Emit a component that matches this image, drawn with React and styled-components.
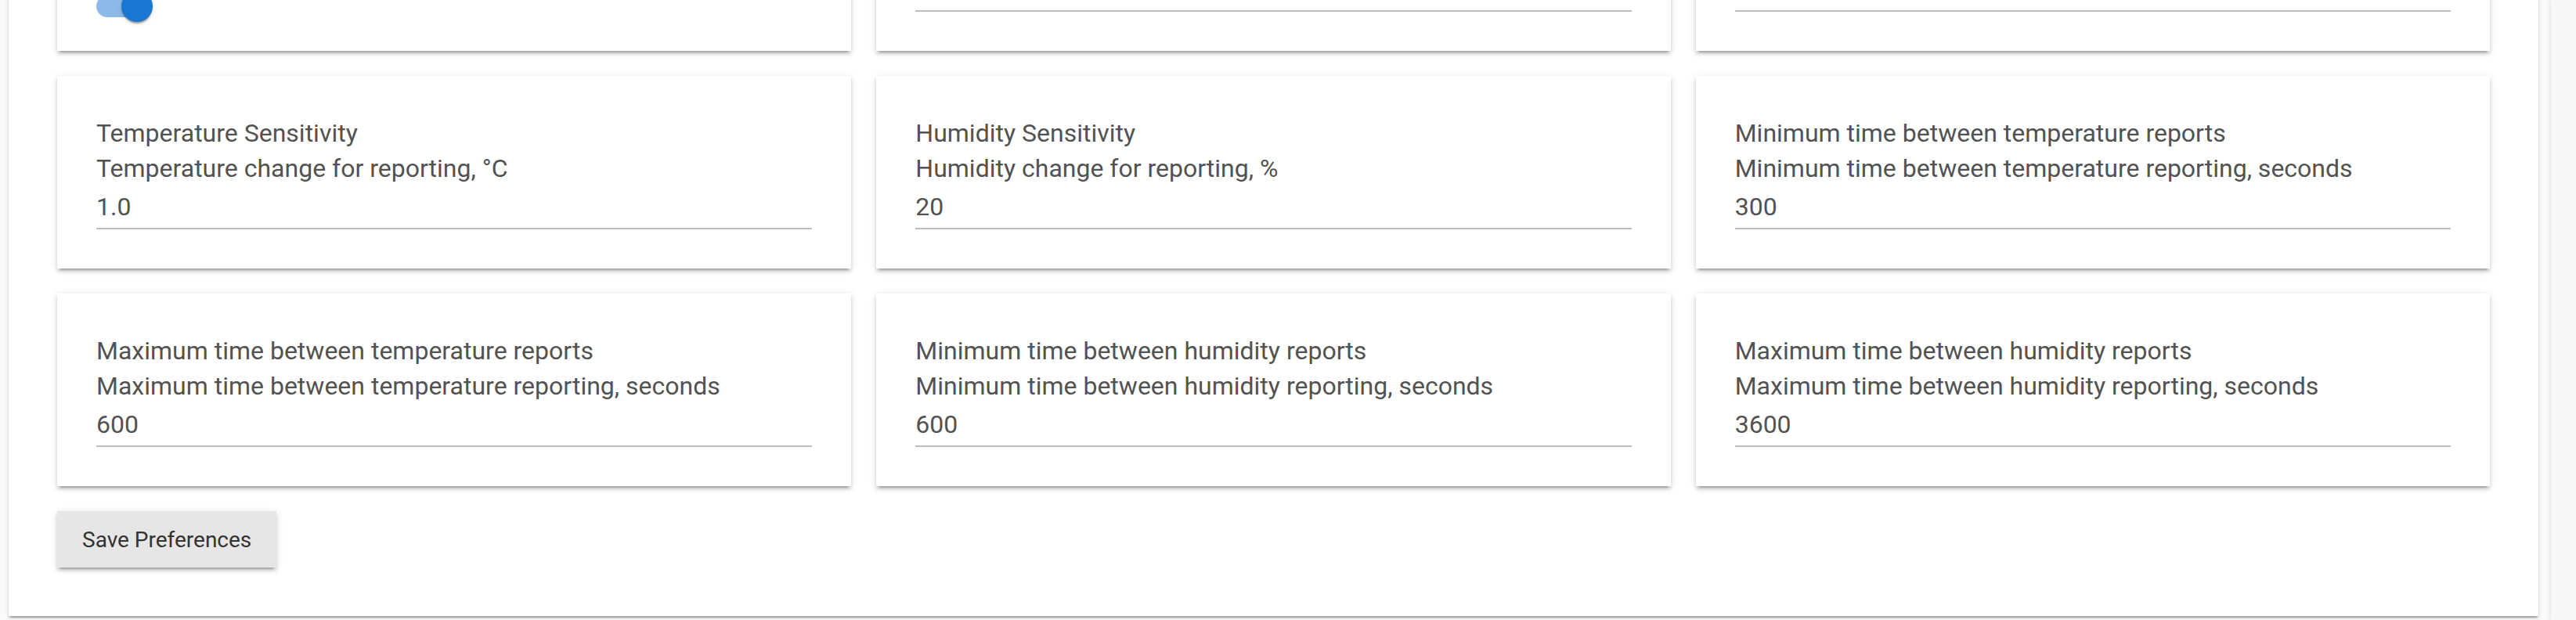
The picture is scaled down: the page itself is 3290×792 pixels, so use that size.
import React from 'react';
import styled, { createGlobalStyle } from 'styled-components';

const GlobalStyle = createGlobalStyle`
	html, body {
		margin: 0;
		padding: 0;
		background: #fafafa;
		font-family: Roboto, 'Liberation Sans', sans-serif;
	}
`;

// the first row is scrolled out of view, only its bottom edge shows
const settings = [
	{ id: 'fahrenheit', toggle: true },
	{ id: 'temp-offset' },
	{ id: 'hum-offset' },
	{ id: 'temp-sens', title: 'Temperature Sensitivity', subtitle: 'Temperature change for reporting, °C', value: '1.0' },
	{ id: 'hum-sens', title: 'Humidity Sensitivity', subtitle: 'Humidity change for reporting, %', value: '20' },
	{
		id: 'temp-min',
		title: 'Minimum time between temperature reports',
		subtitle: 'Minimum time between temperature reporting, seconds',
		value: '300',
	},
	{
		id: 'temp-max',
		title: 'Maximum time between temperature reports',
		subtitle: 'Maximum time between temperature reporting, seconds',
		value: '600',
	},
	{
		id: 'hum-min',
		title: 'Minimum time between humidity reports',
		subtitle: 'Minimum time between humidity reporting, seconds',
		value: '600',
	},
	{
		id: 'hum-max',
		title: 'Maximum time between humidity reports',
		subtitle: 'Maximum time between humidity reporting, seconds',
		value: '3600',
	},
];

const App = () => {
	return (
		<>
			<GlobalStyle />
			<Page>
				<Panel>
					<Grid>
						{settings.map((item) => (
							<Card key={item.id} $toggle={item.toggle}>
								<Label>{item.title}</Label>
								<Label>{item.subtitle}</Label>
								{item.toggle ? (
									<Switch>
										<Track />
										<Thumb />
									</Switch>
								) : (
									<Field>{item.value}</Field>
								)}
							</Card>
						))}
					</Grid>
					<Button>Save Preferences</Button>
				</Panel>
				<Side />
			</Page>
		</>
	);
};

export default App;

const Page = styled.div`
	display: flex;
	align-items: flex-start;
	height: 792px;
	overflow: hidden;
	padding-left: 11px;
	background: #fafafa;
`;

const Panel = styled.div`
	flex: 0 0 3231px;
	box-sizing: border-box;
	margin-top: -243px;
	padding: 62px;
	background: #fff;
	box-shadow: 0 4px 2px -2px rgba(0, 0, 0, 0.2), 0 2px 2px 0 rgba(0, 0, 0, 0.14),
		0 2px 6px 0 rgba(0, 0, 0, 0.12);
`;

const Side = styled.div`
	flex: 1;
	align-self: stretch;
	margin-left: 16px;
	background: #f7f7f7;
	box-shadow: -2px 0 4px rgba(0, 0, 0, 0.08);
`;

const Grid = styled.div`
	display: grid;
	grid-template-columns: repeat(3, 1fr);
	gap: 32px;
`;

const Card = styled.div`
	display: flex;
	flex-direction: column;
	box-sizing: border-box;
	padding: 51px 50px ${(p) => (p.$toggle ? '37px' : '50px')};
	background: #fff;
	box-shadow: 0 6px 2px -4px rgba(0, 0, 0, 0.2), 0 4px 4px 0 rgba(0, 0, 0, 0.14),
		0 2px 10px 0 rgba(0, 0, 0, 0.12);
`;

const Label = styled.div`
	min-height: 45px;
	font-size: 32px;
	line-height: 45px;
	color: #525252;
	white-space: nowrap;
`;

const Field = styled.div`
	min-height: 45px;
	padding: 4px 0;
	font-size: 32px;
	line-height: 45px;
	color: #525252;
	border-bottom: 2px solid #bdbdbd;
`;

const Switch = styled.div`
	display: flex;
	align-items: center;
	margin-top: 28px;
	height: 40px;
`;

const Track = styled.span`
	width: 68px;
	height: 28px;
	border-radius: 14px;
	background: #8cbae8;
`;

const Thumb = styled.span`
	width: 40px;
	height: 40px;
	margin-left: -36px;
	border-radius: 50%;
	background: #1976d2;
	box-shadow: 0 4px 2px -2px rgba(0, 0, 0, 0.2), 0 2px 2px 0 rgba(0, 0, 0, 0.14),
		0 2px 6px 0 rgba(0, 0, 0, 0.12);
`;

const Button = styled.button`
	display: block;
	margin-top: 32px;
	height: 72px;
	padding: 0 32px;
	border: none;
	border-radius: 0;
	background: #e6e6e6;
	color: #333;
	font-family: Roboto, 'Liberation Sans', sans-serif;
	font-size: 28px;
	cursor: pointer;
	box-shadow: 0 6px 2px -4px rgba(0, 0, 0, 0.2), 0 4px 4px 0 rgba(0, 0, 0, 0.14),
		0 2px 10px 0 rgba(0, 0, 0, 0.12);
`;
